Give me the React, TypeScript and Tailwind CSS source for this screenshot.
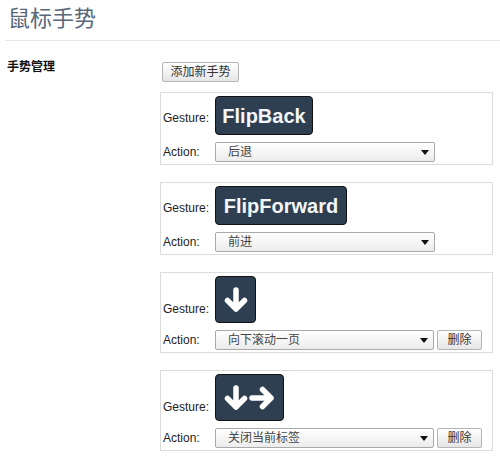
const font = { fontFamily: '"Liberation Sans", "Noto Sans CJK SC", Arial, sans-serif' };

const Caret = () => (
  <svg width="8" height="5" viewBox="0 0 8 5" className="shrink-0">
    <path d="M0 0 H8 L4 5 Z" fill="#111" />
  </svg>
);

const Select = ({ value, wide }: { value: string; wide?: boolean }) => (
  <div
    className={`flex h-[20px] items-center justify-between rounded-[2px] border border-[#a9a9a9] bg-gradient-to-b from-white to-[#ececec] pl-[12px] pr-[5px] text-[12px] text-[#444] ${
      wide ? "w-[220px]" : "w-[219px]"
    }`}
  >
    <span>{value}</span>
    <Caret />
  </div>
);

const DeleteButton = () => (
  <button className="ml-[3px] h-[20px] w-[45px] rounded-[2px] border border-[#b5b5b5] bg-gradient-to-b from-white to-[#e6e6e6] text-[12px] text-[#333]">
    删除
  </button>
);

const GestureBox = ({ children, w, h }: { children: React.ReactNode; w: string; h: string }) => (
  <div
    className={`flex items-center justify-center rounded-[4px] border border-[#111] bg-[#2e3f51] ${w} ${h}`}
  >
    {children}
  </div>
);

const DownArrow = () => (
  <svg width="24" height="26" viewBox="0 0 24 26">
    <path
      d="M12 3 V22 M3.5 13.5 L12 22 L20.5 13.5"
      stroke="white"
      strokeWidth="5.5"
      strokeLinecap="round"
      strokeLinejoin="round"
      fill="none"
    />
  </svg>
);

const RightArrow = () => (
  <svg width="26" height="24" viewBox="0 0 26 24">
    <path
      d="M3 12 H22 M13.5 3.5 L22 12 L13.5 20.5"
      stroke="white"
      strokeWidth="5.5"
      strokeLinecap="round"
      strokeLinejoin="round"
      fill="none"
    />
  </svg>
);

const Card = ({
  gesture,
  action,
  removable,
  labelPad,
}: {
  gesture: React.ReactNode;
  action: string;
  removable?: boolean;
  labelPad: string;
}) => (
  <div className="w-[333px] border border-[#dcdcdc] pl-[2px] pt-[3px] pb-[2px]">
    <div className="flex items-end">
      <div className={`w-[52px] text-[12px] leading-[14px] text-[#222] ${labelPad}`}>Gesture:</div>
      {gesture}
    </div>
    <div className="mt-[7px] flex items-center">
      <div className="w-[52px] text-[12px] leading-[14px] text-[#222]">Action:</div>
      <Select value={action} wide={!removable} />
      {removable && <DeleteButton />}
    </div>
  </div>
);

export default function App() {
  return (
    <div className="h-[460px] w-[500px] overflow-hidden bg-white" style={font}>
      <div className="ml-[5px] h-[41px] border-b border-[#e6e6e6] pl-[3px] pt-[4px]">
        <h1 className="text-[22px] leading-[30px] text-[#58687a]">鼠标手势</h1>
      </div>

      <div className="mt-[18px] flex">
        <div className="w-[160px] pl-[7px] pt-[1px] text-[12px] font-bold leading-[14px] text-[#111]">
          手势管理
        </div>

        <div className="flex flex-col">
          <button className="ml-[2px] mt-[3px] h-[20px] w-[77px] rounded-[2px] border border-[#b5b5b5] bg-gradient-to-b from-white to-[#e6e6e6] text-[12px] text-[#333]">
            添加新手势
          </button>

          <div className="mt-[10px] flex flex-col gap-[17px]">
            <Card
              labelPad="pb-[10px]"
              action="后退"
              gesture={
                <GestureBox w="w-[98px]" h="h-[39px]">
                  <span className="text-[20px] font-bold text-[#f4f6f8]">FlipBack</span>
                </GestureBox>
              }
            />
            <Card
              labelPad="pb-[10px]"
              action="前进"
              gesture={
                <GestureBox w="w-[132px]" h="h-[39px]">
                  <span className="text-[20px] font-bold text-[#f4f6f8]">FlipForward</span>
                </GestureBox>
              }
            />
            <Card
              labelPad="pb-[7px]"
              action="向下滚动一页"
              removable
              gesture={
                <GestureBox w="w-[41px]" h="h-[47px]">
                  <DownArrow />
                </GestureBox>
              }
            />
            <Card
              labelPad="pb-[7px]"
              action="关闭当前标签"
              removable
              gesture={
                <GestureBox w="w-[69px]" h="h-[47px]">
                  <div className="flex items-center gap-[1px]">
                    <DownArrow />
                    <RightArrow />
                  </div>
                </GestureBox>
              }
            />
          </div>
        </div>
      </div>
    </div>
  );
}
